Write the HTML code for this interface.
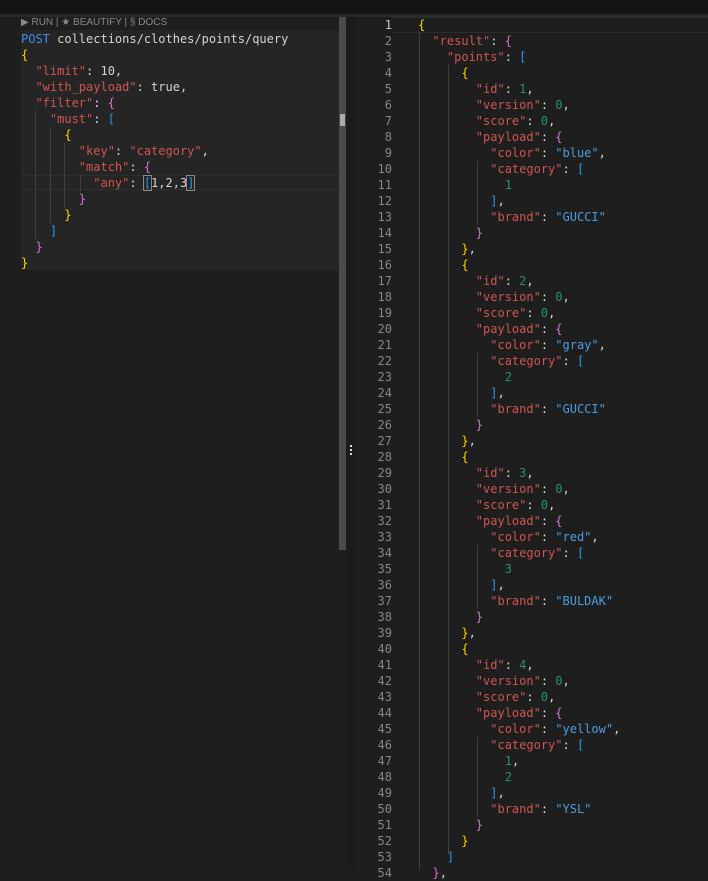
<!DOCTYPE html>
<html><head><style>
*{margin:0;padding:0;box-sizing:border-box}
body{width:708px;height:870px;background:#1e1e1e;overflow:hidden;position:relative;font-family:"DejaVu Sans Mono","Liberation Mono",monospace;font-size:12px}
.abs{position:absolute}
pre{position:absolute;font-family:"DejaVu Sans Mono","Liberation Mono",monospace;font-size:12px;line-height:16px;color:#d4d4d4;white-space:pre}
.k{color:#d05454}.s{color:#4a9de4}.n{color:#23926a}.y{color:#ffd700}.p{color:#da70d6}.b{color:#1f9cf0}.post{color:#3b8eea}
.g{position:absolute;width:1px;background:#404040}
.ln{position:absolute;left:356px;width:36px;text-align:right;color:#858585;font-family:"DejaVu Sans Mono",monospace;font-size:12px;line-height:16px;white-space:pre}
</style></head><body>
<div class="abs" style="left:0;top:0;width:708px;height:14px;background:#141414"></div>
<div class="abs" style="left:0;top:14px;width:708px;height:3px;background:#2a2a2a"></div>
<div class="abs" style="left:21px;top:30px;width:318px;height:240px;background:#252526"></div>
<div class="abs" style="left:21px;top:175px;width:318px;height:15px;border-top:1px solid #2f2f2f;border-bottom:1px solid #2f2f2f"></div>
<div class="abs" style="left:21px;top:17px;font-family:'Liberation Sans',sans-serif;font-size:10px;color:#8a8a8a;line-height:12px">▶ RUN | ★ BEAUTIFY | § DOCS</div>
<div class="abs" style="left:339px;top:17px;width:7px;height:533px;background:#4a4a4a"></div>
<div class="abs" style="left:340px;top:114px;width:5px;height:12px;background:#aaa"></div>
<div class="abs" style="left:346px;top:17px;width:10px;height:853px;background:#191b1c"></div>
<div class="abs" style="left:350px;top:445px;width:2px;height:2px;background:#ddd;box-shadow:0 4px 0 #ddd,0 8px 0 #ddd"></div>
<div class="g" style="left:35px;top:111px;height:128px"></div>
<div class="g" style="left:50px;top:127px;height:96px"></div>
<div class="g" style="left:64px;top:143px;height:64px"></div>
<div class="g" style="left:80px;top:175px;height:16px"></div>
<pre style="left:21px;top:31px"><span class="post">POST</span> collections/clothes/points/query
<span class="y">{</span>
  <span class="k">"limit"</span>: 10,
  <span class="k">"with_payload"</span>: true,
  <span class="k">"filter"</span>: <span class="p">{</span>
    <span class="k">"must"</span>: <span class="b">[</span>
      <span class="y">{</span>
        <span class="k">"key"</span>: <span class="k">"category"</span>,
        <span class="k">"match"</span>: <span class="p">{</span>
          <span class="k">"any"</span>: <span class="b" style="outline:1px solid #888">[</span>1,2,3<span class="b" style="outline:1px solid #888">]</span>
        <span class="p">}</span>
      <span class="y">}</span>
    <span class="b">]</span>
  <span class="p">}</span>
<span class="y">}</span></pre>
<div class="abs" style="left:392px;top:17px;width:316px;height:16px;border-top:1px solid #2c2c2c;border-bottom:1px solid #2c2c2c"></div>
<div class="ln" style="top:17px"><span style="color:#c6c6c6">1</span>
2
3
4
5
6
7
8
9
10
11
12
13
14
15
16
17
18
19
20
21
22
23
24
25
26
27
28
29
30
31
32
33
34
35
36
37
38
39
40
41
42
43
44
45
46
47
48
49
50
51
52
53
54</div>
<div class="g" style="left:419px;top:33px;height:837px"></div>
<div class="g" style="left:448px;top:65px;height:790px"></div>
<div class="g" style="left:477px;top:161px;height:64px"></div>
<div class="g" style="left:477px;top:353px;height:64px"></div>
<div class="g" style="left:477px;top:545px;height:64px"></div>
<div class="g" style="left:477px;top:737px;height:80px"></div>
<pre style="left:418px;top:17px"><span class="y">{</span>
  <span class="k">"result"</span>: <span class="p">{</span>
    <span class="k">"points"</span>: <span class="b">[</span>
      <span class="y">{</span>
        <span class="k">"id"</span>: <span class="n">1</span>,
        <span class="k">"version"</span>: <span class="n">0</span>,
        <span class="k">"score"</span>: <span class="n">0</span>,
        <span class="k">"payload"</span>: <span class="p">{</span>
          <span class="k">"color"</span>: <span class="s">"blue"</span>,
          <span class="k">"category"</span>: <span class="b">[</span>
            <span class="n">1</span>
          <span class="b">]</span>,
          <span class="k">"brand"</span>: <span class="s">"GUCCI"</span>
        <span class="p">}</span>
      <span class="y">}</span>,
      <span class="y">{</span>
        <span class="k">"id"</span>: <span class="n">2</span>,
        <span class="k">"version"</span>: <span class="n">0</span>,
        <span class="k">"score"</span>: <span class="n">0</span>,
        <span class="k">"payload"</span>: <span class="p">{</span>
          <span class="k">"color"</span>: <span class="s">"gray"</span>,
          <span class="k">"category"</span>: <span class="b">[</span>
            <span class="n">2</span>
          <span class="b">]</span>,
          <span class="k">"brand"</span>: <span class="s">"GUCCI"</span>
        <span class="p">}</span>
      <span class="y">}</span>,
      <span class="y">{</span>
        <span class="k">"id"</span>: <span class="n">3</span>,
        <span class="k">"version"</span>: <span class="n">0</span>,
        <span class="k">"score"</span>: <span class="n">0</span>,
        <span class="k">"payload"</span>: <span class="p">{</span>
          <span class="k">"color"</span>: <span class="s">"red"</span>,
          <span class="k">"category"</span>: <span class="b">[</span>
            <span class="n">3</span>
          <span class="b">]</span>,
          <span class="k">"brand"</span>: <span class="s">"BULDAK"</span>
        <span class="p">}</span>
      <span class="y">}</span>,
      <span class="y">{</span>
        <span class="k">"id"</span>: <span class="n">4</span>,
        <span class="k">"version"</span>: <span class="n">0</span>,
        <span class="k">"score"</span>: <span class="n">0</span>,
        <span class="k">"payload"</span>: <span class="p">{</span>
          <span class="k">"color"</span>: <span class="s">"yellow"</span>,
          <span class="k">"category"</span>: <span class="b">[</span>
            <span class="n">1</span>,
            <span class="n">2</span>
          <span class="b">]</span>,
          <span class="k">"brand"</span>: <span class="s">"YSL"</span>
        <span class="p">}</span>
      <span class="y">}</span>
    <span class="b">]</span>
  <span class="p">}</span>,</pre>
</body></html>
